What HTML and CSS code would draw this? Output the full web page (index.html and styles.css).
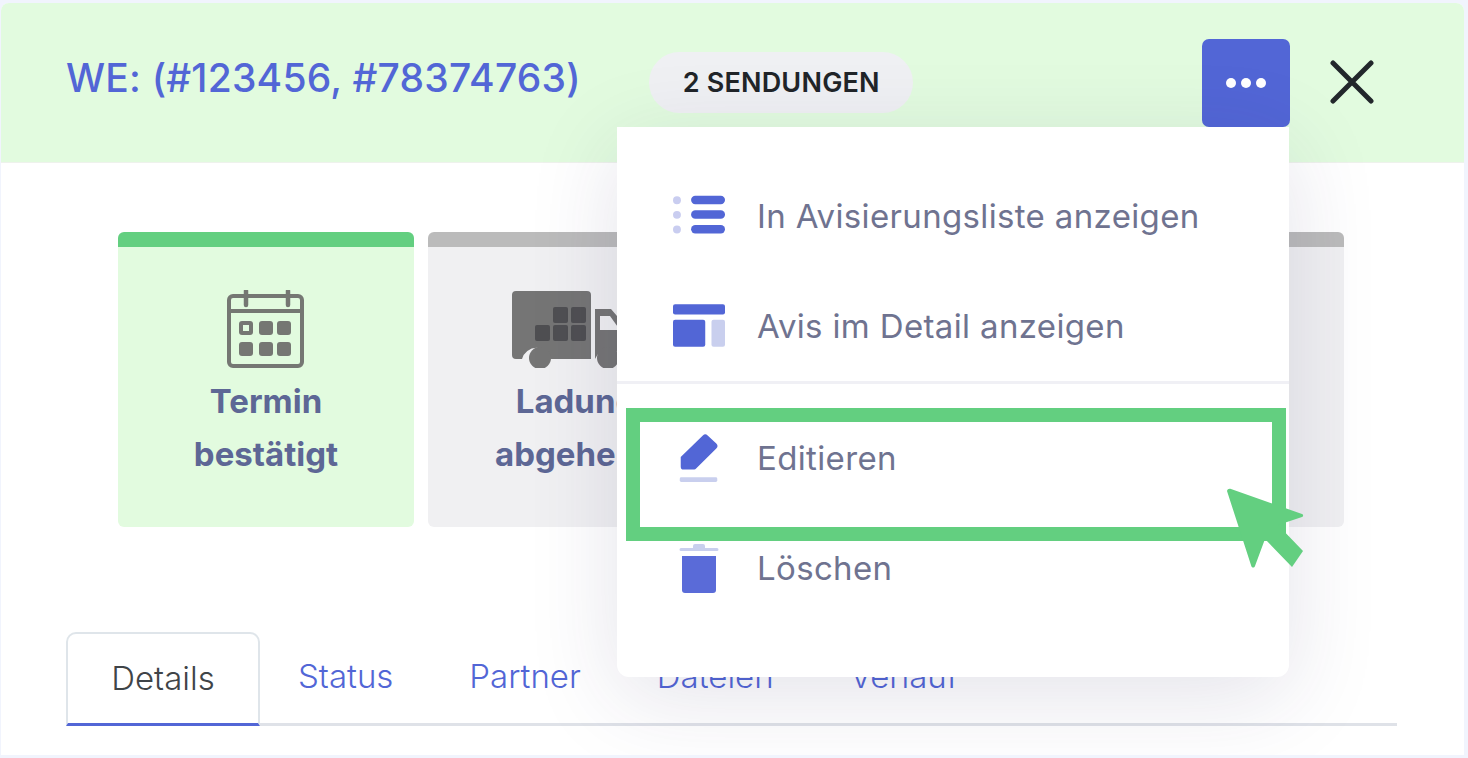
FILE: index.html
```html
<!DOCTYPE html>
<html lang="de">
<head>
<meta charset="utf-8">
<title>Avisierung</title>
<link rel="stylesheet" href="styles.css">
</head>
<body>
<div class="window">
  <header class="head">
    <h1 class="title">WE: (#123456, #78374763)</h1>
    <span class="badge">2 SENDUNGEN</span>
    <button class="more" aria-label="Mehr"><i></i><i></i><i></i></button>
    <svg class="close" viewBox="0 0 44 44"><path d="M3 3 41 41M41 3 3 41" fill="none" stroke="#22272b" stroke-width="5" stroke-linecap="round"/></svg>
  </header>
  <section class="cards">
    <article class="card done">
      <svg class="cal" viewBox="0 0 78 78">
        <g fill="none" stroke="#757773" stroke-width="4"><rect x="2" y="6" width="73" height="70" rx="4"/><path d="M2 21H75"/></g>
        <path d="M19 1v14M61 1v14" stroke="#757773" stroke-width="4.5" stroke-linecap="round"/>
        <g fill="#757773"><rect x="12" y="31" width="14" height="14" rx="3"/><rect x="32" y="31" width="14" height="14" rx="3"/><rect x="50" y="31" width="14" height="14" rx="3"/><rect x="12" y="52" width="14" height="14" rx="3"/><rect x="32" y="52" width="14" height="14" rx="3"/><rect x="50" y="52" width="14" height="14" rx="3"/></g>
        <rect x="16" y="35" width="6" height="6" fill="#e2fbdf"/>
      </svg>
      <p>Termin<br>bestätigt</p>
    </article>
    <article class="card">
      <svg class="truck" viewBox="0 0 130 78">
        <path d="M5 1H76a4 4 0 0 1 4 4V69H40a15 15 0 0 0-29 0H5a4 4 0 0 1-4-4V5a4 4 0 0 1 4-4Z" fill="#757575"/>
        <path d="M84 19H100L118 40V69H112a15 15 0 0 0-28 0Z" fill="#757575"/>
        <path d="M89 26H99L109 40H89Z" fill="#f0f0f2"/>
        <circle cx="29" cy="68" r="11" fill="#757575"/><circle cx="97" cy="68" r="11" fill="#757575"/>
        <g fill="#4f4f52"><rect x="42" y="17" width="15" height="16" rx="2"/><rect x="60" y="17" width="15" height="16" rx="2"/><rect x="24" y="35" width="15" height="16" rx="2"/><rect x="42" y="35" width="15" height="16" rx="2"/><rect x="60" y="35" width="15" height="16" rx="2"/></g>
      </svg>
      <p>Ladung<br>abgehend</p>
    </article>
    <article class="card"></article>
    <article class="card"></article>
  </section>
  <nav class="tabs">
    <a class="tab active">Details</a>
    <a class="tab">Status</a>
    <a class="tab">Partner</a>
    <a class="tab">Dateien</a>
    <a class="tab">Verlauf</a>
  </nav>
  <div class="menu">
    <div class="item">
      <svg viewBox="0 0 46 36"><g fill="#c9cdf0"><circle cx="3.500" cy="4" r="3.500"/><circle cx="3.500" cy="17" r="3.500"/><circle cx="3.500" cy="30" r="3.500"/></g><g fill="#5266d6"><rect x="16" y="0" width="30" height="7.500" rx="3.700"/><rect x="16" y="13" width="30" height="7.500" rx="3.700"/><rect x="16" y="26" width="30" height="7.500" rx="3.700"/></g></svg>
      <span>In Avisierungsliste anzeigen</span>
    </div>
    <div class="item">
      <svg viewBox="0 0 50 42"><rect width="50" height="10" rx="2" fill="#5266d6"/><rect y="15" width="31" height="26" rx="2" fill="#5266d6"/><rect x="37" y="15" width="13" height="26" rx="2" fill="#c9cfee"/></svg>
      <span>Avis im Detail anzeigen</span>
    </div>
    <hr class="rule">
    <div class="item">
      <svg viewBox="0 0 40 52"><path d="M1 25 24 2.500a3.500 3.500 0 0 1 5 0l9 8.500a3.500 3.500 0 0 1 0 5L17 37a3 3 0 0 1-2 1H4a3 3 0 0 1-3-3Z" fill="#5266d6"/><rect y="46" width="39" height="5" rx="1.500" fill="#c9cfee"/></svg>
      <span>Editieren</span>
    </div>
    <div class="item">
      <svg viewBox="0 0 40 50"><path d="M14 3a2 2 0 0 1 2-2h8a2 2 0 0 1 2 2v2h12a1.500 1.500 0 0 1 0 3H2a1.500 1.500 0 0 1 0-3h12Z" fill="#c9cfee"/><path d="M3 13H37V47a3 3 0 0 1-3 3H6a3 3 0 0 1-3-3Z" fill="#5a6bd8"/></svg>
      <span>Löschen</span>
    </div>
  </div>
  <div class="highlight"></div>
  <svg class="cursor" viewBox="0 0 80 82"><path d="M2 3C2.500 1 4 .5 6 1L77 26c1.500.5 1.500 2.500 0 3L53 37 78 63 67 79 40 51 30 78c-.7 2-3 2-3.700 0Z" fill="#63cf80"/></svg>
</div>
</body>
</html>
```
FILE: styles.css
```css
* { box-sizing: border-box; }
html, body { margin: 0; height: 100%; }
body { background: #f1f4fd; font-family: Inter, "Noto Sans", sans-serif; overflow: hidden; }
.window { position: relative; width: 1463px; height: 752px; margin: 3px 0 0 1px; background: #fff; border-radius: 8px 8px 0 0; overflow: hidden; }
.head { height: 160px; background: #e2fbdf; padding: 37px 90px 0 65px; display: flex; align-items: flex-start; border-bottom: 1px solid #eef2ec; }
.title { margin: 0; font-size: 39px; line-height: 76px; font-weight: 500; color: #5266d6; letter-spacing: .2px; white-space: nowrap; width: 584px; }
.badge { margin-top: 12px; width: 264px; height: 61px; border-radius: 31px; background: #eff0f3; color: #212529; font-size: 27px; font-weight: 600; display: flex; align-items: center; justify-content: center; letter-spacing: .2px; }
.more { margin: -1px 0 0 289px; width: 88px; height: 88px; border: 0; border-radius: 7px; background: #5266d6; display: flex; align-items: center; justify-content: center; gap: 5px; padding: 0; }
.more i { width: 10px; height: 10px; border-radius: 50%; background: #fff; }
.close { margin: 20px 0 0 40px; width: 44px; height: 44px; flex: none; }
.cards { display: grid; grid-template-columns: repeat(4, 1fr); gap: 14px; margin: 69px 120px 0 117px; height: 295px; }
.card { background: #f0f0f2; border-top: 15px solid #bbb; border-radius: 6px; display: flex; flex-direction: column; align-items: center; padding-top: 43px; }
.card.done { background: #e2fbdf; border-top-color: #63cf80; }
.card p { margin: 7px 0 0; text-align: center; font-size: 33px; line-height: 53px; font-weight: 700; color: #5d6795; }
.cal { width: 78px; height: 78px; }
.truck { width: 130px; height: 78px; }
.tabs { display: flex; margin: 105px 67px 0 65px; height: 94px; border-bottom: 3px solid #dfe2e8; }
.tab { font-size: 33px; color: #5266d6; font-weight: 300; padding: 24px 38px 0; height: 94px; white-space: nowrap; }
.tab.active { color: #3f4448; width: 194px; text-align: center; padding: 24px 0 0; border: 2px solid #dfe5ea; border-bottom: 3px solid #5266d6; border-radius: 10px 10px 0 0; margin-right: 0; }
.menu { position: absolute; left: 616px; top: 124px; width: 672px; height: 550px; background: #fff; border-radius: 0 0 12px 12px; box-shadow: 0 20px 90px rgba(50, 40, 90, .13); padding-top: 34px; }
.item { display: flex; align-items: center; height: 110px; padding-left: 56px; color: #6f7390; font-size: 33px; letter-spacing: .35px; }
.item svg { width: 52px; height: 50px; margin-right: 32px; flex: none; }
.item span { white-space: nowrap; }
.rule { margin: 0 0 19px; height: 3px; border: 0; background: #f0f0f5; }
.highlight { position: absolute; left: 625px; top: 405px; width: 660px; height: 133px; border: 14px solid #63cf80; }
.cursor { position: absolute; left: 1224px; top: 485px; width: 80px; height: 82px; }
```
